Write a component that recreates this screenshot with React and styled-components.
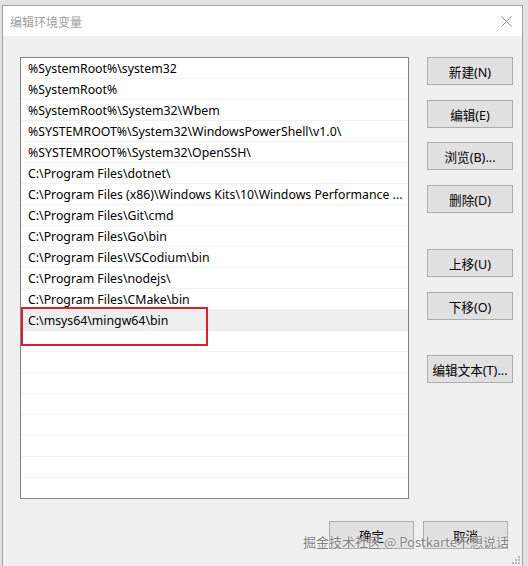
import React from 'react';
import styled, { createGlobalStyle } from 'styled-components';

const GlobalStyle = createGlobalStyle`
  html, body {
    margin: 0;
    padding: 0;
    background: #e2e2e2;
  }
  body {
    font-family: "Noto Sans", "Noto Sans CJK SC", sans-serif;
    -webkit-font-smoothing: antialiased;
  }
`;

const Window = styled.div`
  position: relative;
  box-sizing: border-box;
  margin: 5px 0 0 2px;
  width: 521px;
  height: 561px;
  border: 1px solid #a3a3a3;
  border-bottom: none;
  background: #f0f0f0;
  display: flex;
  flex-direction: column;
`;

const TitleBar = styled.div`
  height: 30px;
  background: #fff;
  display: flex;
  align-items: center;
  justify-content: space-between;
  padding: 0 10px 0 7px;
`;

const Title = styled.span`
  font-family: "Noto Sans CJK SC", sans-serif;
  font-size: 12px;
  color: #a0a0a0;
`;

const Close = styled.svg`
  width: 11px;
  height: 11px;
`;

const Content = styled.div`
  display: flex;
  padding: 21px 0 0 17px;
`;

const List = styled.div`
  position: relative;
  box-sizing: border-box;
  width: 389px;
  height: 442px;
  border: 1px solid #828282;
  background: #fff;
  overflow: hidden;
`;

const Row = styled.div`
  box-sizing: border-box;
  height: 21px;
  line-height: 22px;
  padding-left: 7px;
  font-size: 12.3px;
  color: #000;
  white-space: nowrap;
  overflow: hidden;
  border-bottom: 1px solid ${p => (p.$selected ? '#eeeeee' : '#f1f1f1')};
  background: ${p => (p.$selected ? '#eeeeee' : '#fff')};
`;

const Highlight = styled.div`
  position: absolute;
  left: 0;
  top: 249px;
  width: 187px;
  height: 39px;
  box-sizing: border-box;
  border: 2px solid #d3232f;
`;

const Side = styled.div`
  display: flex;
  flex-direction: column;
  margin-left: 18px;
`;

const Button = styled.div`
  box-sizing: border-box;
  width: ${p => p.$width || 86}px;
  height: 28px;
  margin-top: ${p => p.$gap || 0}px;
  border: 1px solid #adadad;
  background: #e1e1e1;
  display: flex;
  align-items: center;
  justify-content: center;
  font-family: "Noto Sans", "Noto Sans CJK SC", sans-serif;
  font-size: 12.6px;
  color: #000;
`;

const Footer = styled.div`
  display: flex;
  justify-content: flex-end;
  gap: 9px;
  padding: 22px 14px 0 0;
`;

const Watermark = styled.div`
  position: absolute;
  right: 13px;
  bottom: 15px;
  font-family: "Noto Sans CJK SC", sans-serif;
  font-size: 13px;
  color: #7e7e7e;
  white-space: nowrap;
  text-shadow: 0 0 1px #fff, 0 0 2px #fff;
`;

const Grip = styled.svg`
  position: absolute;
  right: 2px;
  bottom: 2px;
  width: 10px;
  height: 10px;
`;

const paths = [
  '%SystemRoot%\\system32',
  '%SystemRoot%',
  '%SystemRoot%\\System32\\Wbem',
  '%SYSTEMROOT%\\System32\\WindowsPowerShell\\v1.0\\',
  '%SYSTEMROOT%\\System32\\OpenSSH\\',
  'C:\\Program Files\\dotnet\\',
  'C:\\Program Files (x86)\\Windows Kits\\10\\Windows Performance ...',
  'C:\\Program Files\\Git\\cmd',
  'C:\\Program Files\\Go\\bin',
  'C:\\Program Files\\VSCodium\\bin',
  'C:\\Program Files\\nodejs\\',
  'C:\\Program Files\\CMake\\bin',
  'C:\\msys64\\mingw64\\bin',
];

const SELECTED = 12;
const TOTAL_ROWS = 21;

export default function App() {
  const rows = Array.from({ length: TOTAL_ROWS }, (_, i) => paths[i] || '');
  return (
    <>
      <GlobalStyle />
      <Window>
        <TitleBar>
          <Title>编辑环境变量</Title>
          <Close viewBox="0 0 11 11">
            <path d="M0.5 0.5 L10.5 10.5 M10.5 0.5 L0.5 10.5" stroke="#8a8a8a" strokeWidth="1" />
          </Close>
        </TitleBar>
        <Content>
          <List>
            {rows.map((text, i) => (
              <Row key={i} $selected={i === SELECTED}>{text}</Row>
            ))}
            <Highlight />
          </List>
          <Side>
            <Button>新建(N)</Button>
            <Button $gap={15}>编辑(E)</Button>
            <Button $gap={14}>浏览(B)...</Button>
            <Button $gap={15}>删除(D)</Button>
            <Button $gap={36}>上移(U)</Button>
            <Button $gap={15}>下移(O)</Button>
            <Button $gap={35}>编辑文本(T)...</Button>
          </Side>
        </Content>
        <Footer>
          <Button $width={85}>确定</Button>
          <Button $width={85}>取消</Button>
        </Footer>
        <Watermark>掘金技术社区 @ Postkarte不想说话</Watermark>
        <Grip viewBox="0 0 10 10">
          {[[8, 0], [8, 3], [5, 3], [8, 6], [5, 6], [2, 6]].map(([x, y], i) => (
            <rect key={i} x={x} y={y + 2} width="2" height="2" fill="#b8b8b8" />
          ))}
        </Grip>
      </Window>
    </>
  );
}
